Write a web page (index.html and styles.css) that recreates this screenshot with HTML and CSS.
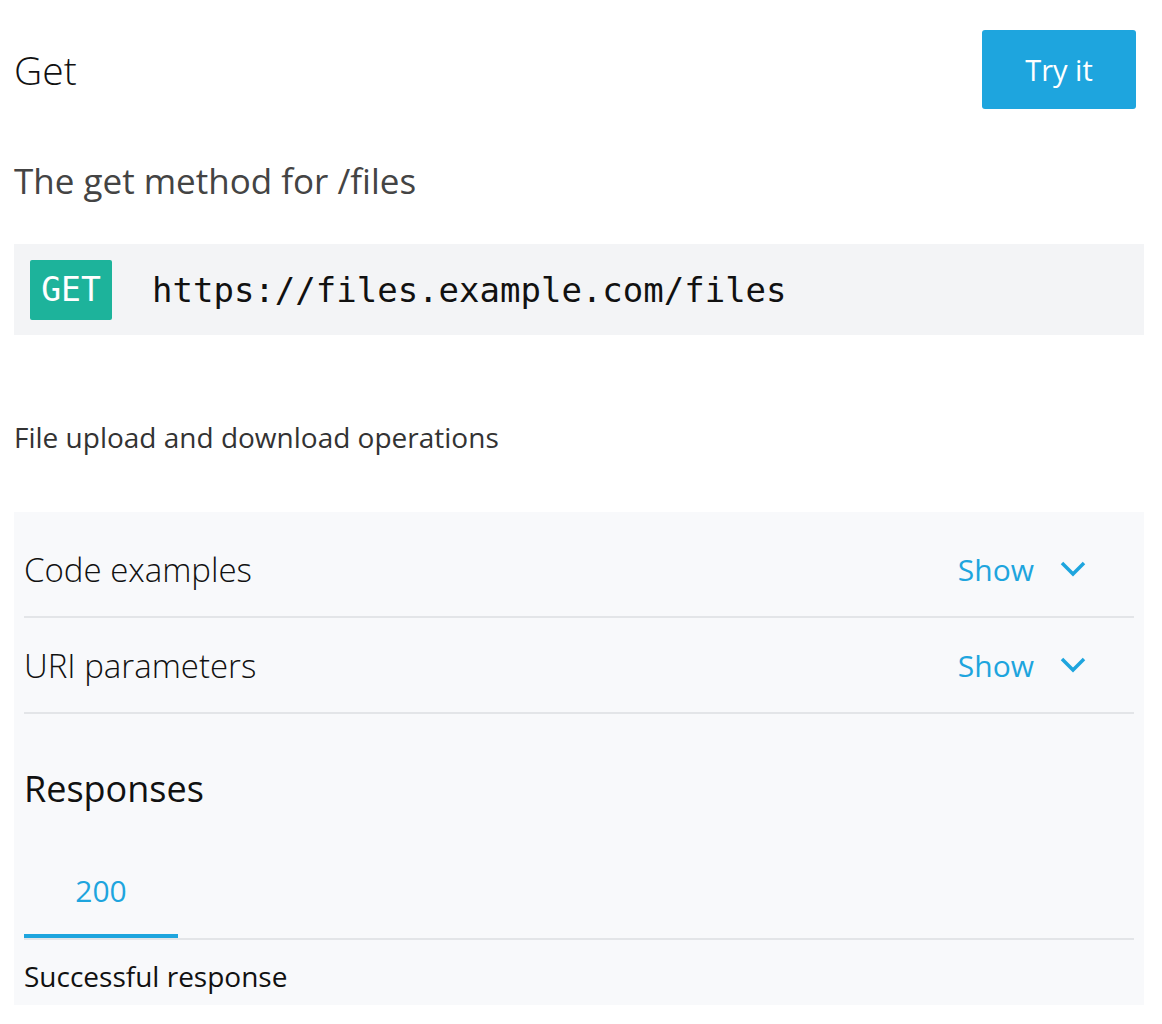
FILE: index.html
```html
<!DOCTYPE html>
<html>
<head>
<meta charset="utf-8">
<link rel="stylesheet" href="styles.css">
</head>
<body>
<div class="page">
  <div class="header">
    <h1 class="title">Get</h1>
    <button class="try-btn">Try it</button>
  </div>
  <p class="summary">The get method for /files</p>
  <div class="endpoint">
    <span class="method">GET</span>
    <span class="url">https://files.example.com/files</span>
  </div>
  <p class="desc">File upload and download operations</p>
  <div class="panel">
    <div class="row">
      <span class="row-label">Code examples</span>
      <span class="toggle">Show
        <svg class="chev" width="26" height="16" viewBox="0 0 26 16"><path d="M2 2 L13 13 L24 2" fill="none" stroke="#1ea5de" stroke-width="3.5"/></svg>
      </span>
    </div>
    <div class="row">
      <span class="row-label">URI parameters</span>
      <span class="toggle">Show
        <svg class="chev" width="26" height="16" viewBox="0 0 26 16"><path d="M2 2 L13 13 L24 2" fill="none" stroke="#1ea5de" stroke-width="3.5"/></svg>
      </span>
    </div>
    <h2 class="resp-title">Responses</h2>
    <div class="tabs">
      <div class="tab active">200</div>
    </div>
    <p class="resp-desc">Successful response</p>
  </div>
</div>
</body>
</html>
```
FILE: styles.css
```css
html, body {
  margin: 0;
  padding: 0;
  background: #ffffff;
}
body {
  font-family: "Open Sans", "Noto Sans", sans-serif;
  color: #111;
}
.page {
  padding: 30px 18px 0 14px;
}
.header {
  display: flex;
  justify-content: space-between;
  align-items: center;
  padding-right: 8px;
}
.title {
  margin: 0;
  font-size: 39px;
  font-weight: 300;
  line-height: 48px;
  color: #111;
}
.try-btn {
  width: 154px;
  height: 79px;
  border: none;
  border-radius: 3px;
  background: #1ea5de;
  color: #fff;
  font-family: "Open Sans", sans-serif;
  font-size: 29px;
  font-weight: 400;
  padding: 0;
}
.summary {
  margin: 50px 0 0;
  font-size: 35px;
  line-height: 44px;
  color: #444;
}
.endpoint {
  margin-top: 41px;
  height: 91px;
  box-sizing: border-box;
  background: #f3f4f6;
  padding: 0 16px;
  display: flex;
  align-items: center;
}
.method {
  width: 82px;
  height: 60px;
  background: #1db39b;
  border-radius: 2px;
  color: #fff;
  font-family: "DejaVu Sans Mono", monospace;
  font-size: 33px;
  display: flex;
  align-items: center;
  justify-content: center;
}
.url {
  margin-left: 40px;
  font-family: "DejaVu Sans Mono", monospace;
  font-size: 34px;
  color: #111;
}
.desc {
  margin: 85px 0 0;
  font-size: 28px;
  line-height: 34px;
  color: #333;
}
.panel {
  margin-top: 58px;
  background: #f8f9fb;
  padding: 10px 10px 11px;
}
.row {
  height: 94px;
  display: flex;
  align-items: center;
  justify-content: space-between;
  border-bottom: 2px solid #e3e5e8;
}
.row-label {
  font-size: 33px;
  font-weight: 300;
  color: #111;
}
.toggle {
  display: flex;
  align-items: center;
  gap: 26px;
  padding-right: 48px;
  color: #1ea5de;
  font-size: 30px;
}
.resp-title {
  margin: 52px 0 0;
  font-size: 36px;
  font-weight: 400;
  line-height: 46px;
}
.tabs {
  margin-top: 30px;
  display: flex;
  border-bottom: 2px solid #e3e5e8;
}
.tab {
  width: 154px;
  text-align: center;
  padding: 30px 0 24px;
  font-size: 30px;
  line-height: 38px;
  color: #1ea5de;
  border-bottom: 4px solid #1ea5de;
}
.resp-desc {
  margin: 18px 0 0;
  font-size: 28px;
  line-height: 36px;
  color: #111;
}
```
